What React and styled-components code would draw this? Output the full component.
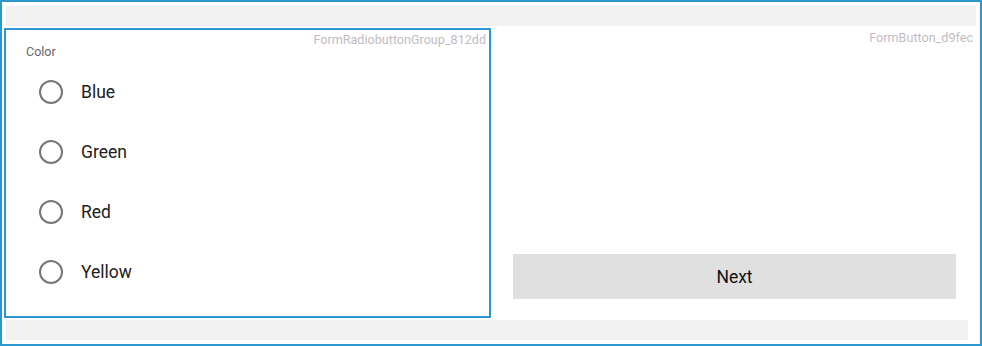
import React from 'react';
import styled, { createGlobalStyle } from 'styled-components';

const GlobalStyle = createGlobalStyle`
  body {
    margin: 0;
    background: #fff;
    font-family: Roboto, "Liberation Sans", sans-serif;
  }
`;

const Frame = styled.div`
  box-sizing: border-box;
  width: 982px;
  height: 346px;
  border: 2px solid #2d98cf;
  padding: 4px 2px 4px 2px;
  display: flex;
  flex-direction: column;
  gap: 2px;
`;

const Spacer = styled.div`
  height: 20px;
  flex: none;
  background: #f2f2f2;
  margin: ${(p) => (p.$bottom ? '0 10px 0 2px' : '0 2px 0 2px')};
`;

const Row = styled.div`
  flex: 1;
  display: flex;
`;

const Panel = styled.div`
  position: relative;
  box-sizing: border-box;
  width: ${(p) => p.$width};
  border: ${(p) => (p.$outlined ? '2px solid #2d98cf' : 'none')};
  display: flex;
  flex-direction: column;
`;

const Tag = styled.span`
  position: absolute;
  top: 2px;
  right: ${(p) => p.$right || '3px'};
  font-size: 12.6px;
  color: #c3bbc4;
`;

const RadioGroup = styled.div`
  padding: 15px 20px 0 20px;
  display: flex;
  flex-direction: column;
`;

const GroupLabel = styled.div`
  font-size: 12.5px;
  line-height: 14px;
  color: #666;
  margin-bottom: 3px;
`;

const Option = styled.label`
  display: flex;
  align-items: center;
  height: 60px;
  padding-left: 13px;
  gap: 18px;
  font-size: 17.5px;
  color: #212121;
  cursor: pointer;
`;

const Circle = styled.span`
  box-sizing: border-box;
  width: 24px;
  height: 24px;
  border-radius: 50%;
  border: 2px solid #777;
`;

const ButtonArea = styled.div`
  flex: 1;
  display: flex;
  flex-direction: column;
  justify-content: flex-end;
  padding: 0 22px 19px 22px;
`;

const Button = styled.button`
  height: 45px;
  border: none;
  background: #e0e0e0;
  font-family: Roboto, "Liberation Sans", sans-serif;
  font-size: 17.5px;
  color: #111;
  cursor: pointer;
`;

const colors = ['Blue', 'Green', 'Red', 'Yellow'];

const App = () => (
  <>
    <GlobalStyle />
    <Frame>
      <Spacer />
      <Row>
        <Panel $width="487px" $outlined>
          <Tag>FormRadiobuttonGroup_812dd</Tag>
          <RadioGroup>
            <GroupLabel>Color</GroupLabel>
            {colors.map((c) => (
              <Option key={c}>
                <Circle />
                {c}
              </Option>
            ))}
          </RadioGroup>
        </Panel>
        <Panel $width="487px">
          <Tag $right="5px">FormButton_d9fec</Tag>
          <ButtonArea>
            <Button>Next</Button>
          </ButtonArea>
        </Panel>
      </Row>
      <Spacer $bottom />
    </Frame>
  </>
);

export default App;
